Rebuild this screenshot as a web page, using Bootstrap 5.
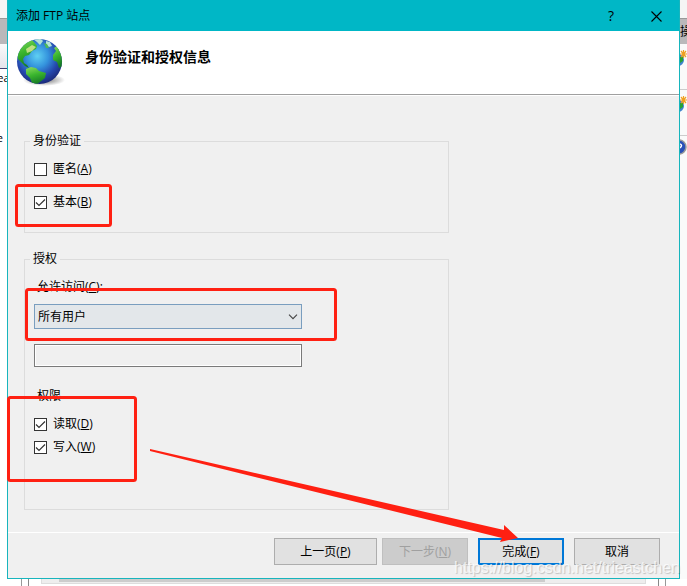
<!DOCTYPE html>
<html lang="zh-CN">
<head>
<meta charset="utf-8">
<meta name="viewport" content="width=device-width, initial-scale=1">
<title>添加 FTP 站点</title>
<link href="https://cdn.jsdelivr.net/npm/bootstrap@5.3.0/dist/css/bootstrap.min.css" rel="stylesheet">
<style>
body { font-family: "Open Sans", "Noto Sans CJK SC", sans-serif; font-size: 12px; line-height: 18px; color: #000; background: #fff; }
.desktop { display: grid; grid-template-columns: 7px minmax(0, 1fr) 7px; grid-template-rows: 1fr 7px; min-height: 100vh; }
.dialog { border: 1px solid #17b5bd; border-top: 0; background: #f0f0f0; }
.titlebar { background: #00b7c6; height: 31px; padding: 0 8px; }
.cap { border: 0; background: none; padding: 0; width: 30px; height: 30px; color: #000; }
.cap-help { font-size: 14px; margin-right: 15px; }
.banner { background: #fff; height: 64px; border-bottom: 1px solid #a0a0a0; box-shadow: 0 1px 0 #fff; padding: 0 5px; gap: 17px; }
.banner h1 { font-size: 14px; line-height: 20px; font-weight: 700; margin: 16px 0 0; }
.globe { margin-top: 4px; }
.page { padding: 37px 16px 20px; }
.group { width: 425px; max-width: 100%; border: 1px solid #dcdcdc; padding: 0 9px; }
.group legend { float: none; width: auto; font-size: 12px; line-height: 18px; margin: 0 0 0 -4px; padding: 0 3px; }
.auth { padding-bottom: 21px; }
.authz { margin-top: 17px; padding-bottom: 53px; }
.option { display: flex; align-items: center; gap: 6px; height: 18px; }
.option input { appearance: none; width: 13px; height: 13px; margin: 0; border: 1px solid #333; background: #fff; }
.option input:checked { background: #fff url("data:image/svg+xml,%3Csvg xmlns='http://www.w3.org/2000/svg' viewBox='0 0 11 11'%3E%3Cpath d='M1 5.5 4 8.5 10 2.5' fill='none' stroke='%23333' stroke-width='1.2'/%3E%3C/svg%3E"); }
.gap-s { margin-top: 5px; }
.gap-m { margin-top: 10px; }
.gap-l { margin-top: 15px; }
.gap-xl { margin-top: 20px; }
.gap-check { margin-top: 8px; }
.caption { display: block; height: 18px; padding-left: 3px; }
.field { display: block; width: 268px; max-width: 100%; border-radius: 0; font-size: 12px; line-height: 18px; color: #000; }
select.field { height: 25px; padding: 0 16px 0 3px; border: 1px solid #7a9ebf; appearance: none; background: #e3e7ea url("data:image/svg+xml,%3Csvg xmlns='http://www.w3.org/2000/svg' width='10' height='6'%3E%3Cpath d='M1 .7 5 4.7 9 .7' fill='none' stroke='%23444' stroke-width='1.1'/%3E%3C/svg%3E") no-repeat right 3px center; }
input.field { height: 23px; padding: 0 4px; border: 1px solid #7a7a7a; background: #f0f0f0; box-shadow: inset 0 0 0 1px #fff; }
.actions { border-top: 1px solid #fff; padding: 5px 19px 13px; gap: 10px; }
.pair { gap: 5px; }
.push { min-width: 86px; height: 27px; padding: 0; border: 1px solid #adadad; background: #e1e1e1; color: #000; font-size: 12px; line-height: 18px; }
.push-back { width: 103px; }
.push-default { border: 2px solid #0078d7; }
.push:disabled { background: #ccc; border-color: #bfbfbf; color: #a0a0a0; }
.peek { overflow: hidden; }
.peek-top { height: 19px; background: #f5f5f5; border-bottom: 1px solid #999; }
.peek-bar { height: 25px; background: #bab8ba; overflow: hidden; white-space: nowrap; }
.peek-tool { height: 25px; background: linear-gradient(#fafafa, #e4e4ec); border-bottom: 1px solid #404070; }
.peek-line { display: flex; justify-content: center; white-space: nowrap; margin: 0; font-size: 11px; }
.peek-gap { padding-top: 42px; justify-content: flex-end; padding-right: 4px; }
.peek-item { height: 46px; border-bottom: 1px solid #ccc; padding-top: 5px; }
.peek-right { background: #fafafa; }
.peek-bottom { grid-column: 1 / -1; padding: 0 21px; }
.frame { height: 7px; border: solid #999; border-width: 0 1px; padding: 0 6px; }
.frame-in { height: 7px; border: solid #888; border-width: 0 1px; padding: 0 12px; }
.scroll { height: 5px; background: #eee; border: 1px solid #ddd; border-top: 0; padding: 0 100px 0 17px; }
.thumb { height: 3px; background: #ccc; }
.marks { position: absolute; left: 0; top: 0; pointer-events: none; }
.watermark { position: absolute; right: 7px; bottom: 8px; font: 16px/20px "Liberation Sans", Arial, sans-serif; color: rgba(255,255,255,.75); text-shadow: 1px 1px 1px rgba(0,0,0,.2); pointer-events: none; }
</style>
</head>
<body>
<div class="desktop position-relative">
  <aside class="peek">
    <div class="peek-top"></div><div class="peek-bar"></div><div class="peek-tool"></div>
    <p class="peek-line">ea</p>
    <p class="peek-line peek-gap">e</p>
  </aside>

  <main class="dialog d-flex flex-column">
    <header class="titlebar d-flex align-items-center">
      <span class="me-auto">添加 FTP 站点</span>
      <button class="cap cap-help" type="button" aria-label="帮助">?</button>
      <button class="cap" type="button" aria-label="关闭"><svg width="11" height="11" viewBox="0 0 11 11"><path d="M.5.5l10 10M10.500.5l-10 10" stroke="#000" stroke-width="1.1"/></svg></button>
    </header>
    <div class="banner d-flex align-items-start">
      <svg class="globe" width="55" height="54" viewBox="0 0 55 54" aria-hidden="true">
        <defs>
          <radialGradient id="sea" cx=".45" cy=".38" r=".62"><stop offset="0" stop-color="#5fd0f2"/><stop offset=".4" stop-color="#3493dd"/><stop offset=".75" stop-color="#2547ad"/><stop offset="1" stop-color="#1c2b7c"/></radialGradient>
          <linearGradient id="land" x2=".3" y2="1"><stop offset="0" stop-color="#8fdc62"/><stop offset=".5" stop-color="#3bb62e"/><stop offset="1" stop-color="#167a25"/></linearGradient>
          <radialGradient id="shade"><stop offset="0" stop-color="#333" stop-opacity=".7"/><stop offset="1" stop-color="#333" stop-opacity="0"/></radialGradient>
          <clipPath id="disc"><circle cx="26.500" cy="26.500" r="22.500"/></clipPath>
        </defs>
        <ellipse cx="31" cy="45" rx="21" ry="6" fill="url(#shade)"/>
        <circle cx="26.500" cy="26.500" r="22.500" fill="url(#sea)"/>
        <g clip-path="url(#disc)">
          <path d="M5 25 4 17 10 8 18 4l3 3 3 4-1 3-4 2-3 4-4 1-2 3 1 4 3 2 2 3-4-2-4-4-3-3z" fill="url(#land)"/>
          <path d="M13 34l5-2 5 1 3 3 7 2-1 5-5 4-4 3-4-2-2-5-4-4z" fill="url(#land)"/>
          <path d="M40 20l3-4-2-3 3-2 6 10v10l-4 2-2-6-4-2z" fill="url(#land)"/>
          <path d="M20 4l7-1 3 3-3 4-3-3zM33 6l4 1 2 4-3 1-3-3z" fill="#b4e2d6"/>
          <path d="M31 8l3 1 2 4-3 0z" fill="#4cb85a"/>
          <path d="M13 14l6-4 4 2-4 4-5 2z" fill="#d4e690" opacity=".85"/>
        </g>
      </svg>
      <h1>身份验证和授权信息</h1>
    </div>

    <form class="page flex-grow-1" id="wizard">
      <fieldset class="group auth">
        <legend>身份验证</legend>
        <label class="option gap-m"><input type="checkbox"><span>匿名(<u>A</u>)</span></label>
        <label class="option gap-l"><input type="checkbox" checked><span>基本(<u>B</u>)</span></label>
      </fieldset>
      <fieldset class="group authz">
        <legend>授权</legend>
        <label class="caption gap-m" for="access">允许访问(<u>C</u>):</label>
        <select class="field gap-check" id="access"><option>所有用户</option></select>
        <input class="field gap-l" type="text" aria-label="用户或组">
        <span class="caption gap-xl">权限</span>
        <label class="option gap-m"><input type="checkbox" checked><span>读取(<u>D</u>)</span></label>
        <label class="option gap-s"><input type="checkbox" checked><span>写入(<u>W</u>)</span></label>
      </fieldset>
    </form>

    <footer class="actions d-flex justify-content-end">
      <div class="pair d-flex">
        <button class="push push-back" type="button">上一页(<u>P</u>)</button>
        <button class="push" type="button" disabled>下一步(<u>N</u>)</button>
      </div>
      <button class="push push-default" type="submit" form="wizard">完成(<u>F</u>)</button>
      <button class="push" type="button">取消</button>
    </footer>
  </main>

  <aside class="peek peek-right">
    <div class="peek-top"></div><div class="peek-bar pt-1">操作</div>
    <div class="peek-item"><svg width="7" height="18" viewBox="0 0 7 18"><circle cx="-2" cy="10" r="6" fill="#3d83cd"/><path d="M0 7h3v4l-3 2z" fill="#28a234"/><path d="M3.500 0v8M0 4h7M1 1l5 6M6 1 1 7" stroke="#f0a020" stroke-width="1.2"/></svg></div>
    <div class="peek-item"><svg width="7" height="18" viewBox="0 0 7 18"><circle cx="-2" cy="10" r="6" fill="#3d83cd"/><path d="M0 7h3v4l-3 2z" fill="#28a234"/><path d="M3.500 0v8M0 4h7M1 1l5 6M6 1 1 7" stroke="#f0a020" stroke-width="1.2"/></svg></div>
    <div><svg width="7" height="18" viewBox="0 0 7 18"><circle cx="-1" cy="10" r="7" fill="#2a50b8" stroke="#999" stroke-width="1.500"/><path d="M0 7q3 1 0 4" stroke="#fff" stroke-width="1.500" fill="none"/></svg></div>
  </aside>

  <div class="peek-bottom"><div class="frame"><div class="frame-in"><div class="scroll"><div class="thumb"></div></div></div></div></div>

  <svg class="marks" width="687" height="586" viewBox="0 0 687 586" aria-hidden="true">
    <g fill="none" stroke="#ff2012" stroke-width="3">
      <rect x="16.500" y="185.500" width="94" height="40" rx="2"/>
      <rect x="26.500" y="289.500" width="309" height="50" rx="2"/>
      <rect x="8.500" y="397.500" width="127" height="83" rx="2"/>
    </g>
    <path d="M150 449 504 530 504 525 518 538 500 542 502 538 150 451z" fill="#ff2012"/>
  </svg>
  <div class="watermark">https://blog.csdn.net/trieastchen</div>
</div>
<script src="https://cdn.jsdelivr.net/npm/bootstrap@5.3.0/dist/js/bootstrap.bundle.min.js"></script>
</body>
</html>
